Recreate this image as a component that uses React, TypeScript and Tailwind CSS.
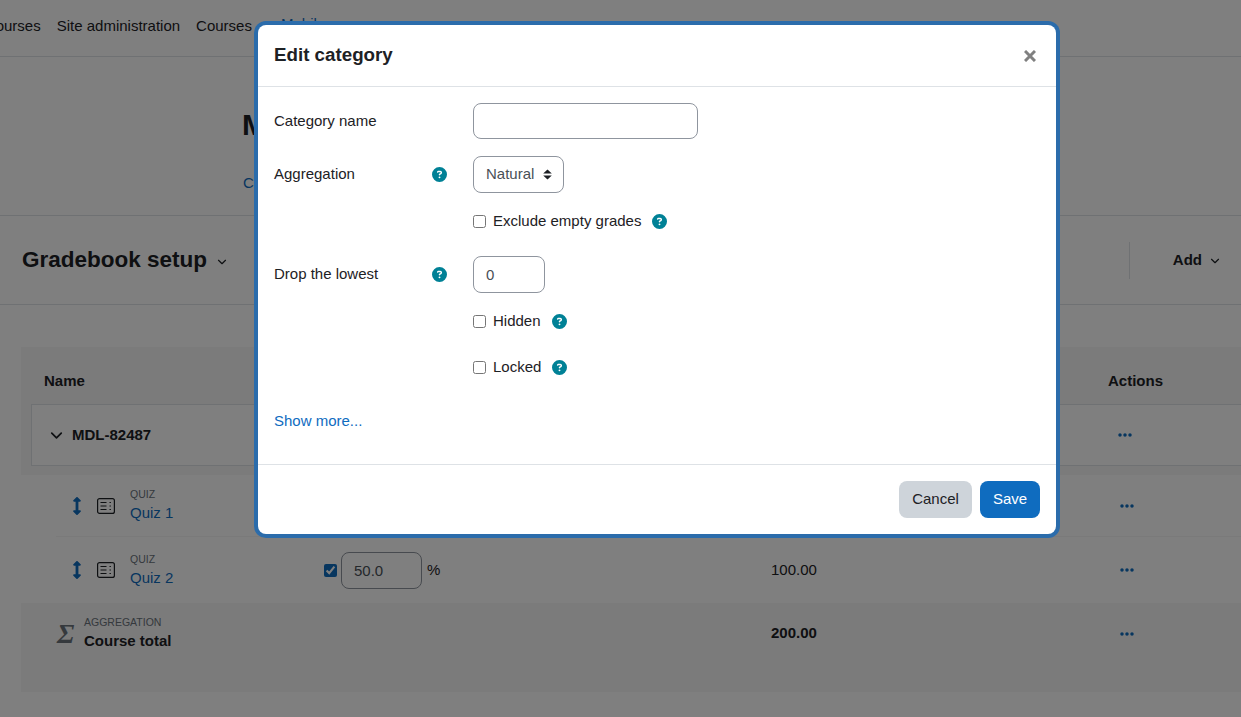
import { FaCircleQuestion, FaEllipsis } from 'react-icons/fa6';
import { FaArrowsAltV } from 'react-icons/fa';
import { ChevronDown } from 'lucide-react';

const Help = () => <FaCircleQuestion className="text-[#008196] text-[15px] shrink-0" />;

const Dots = () => <FaEllipsis className="text-[#0f6cbf] text-[16px] shrink-0" />;

const QuizIcon = () => (
  <svg width="18" height="16" viewBox="0 0 18 16" fill="none" stroke="#1d2125" strokeWidth="1.2" className="shrink-0">
    <rect x="0.6" y="0.6" width="16.8" height="14.8" rx="2" />
    <path d="M3.5 4.5h6M3.5 8h6M3.5 11.5h6" />
    <path d="M12.5 4.5h2M12.5 8h2M12.5 11.5h2" strokeDasharray="1.4 0.6" />
  </svg>
);

function CheckRow({ label, className }: { label: string; className: string }) {
  return (
    <label className={`flex items-center ml-[215px] ${className}`}>
      <input type="checkbox" className="w-[13px] h-[13px] m-0" />
      <span className="ml-[7px] mr-[11px]">{label}</span>
      <Help />
    </label>
  );
}

function QuizRow({ name, weight, total, className }: { name: string; weight?: string; total?: string; className: string }) {
  return (
    <div className={`flex items-center ml-[35px] ${className}`}>
      <FaArrowsAltV className="text-[#0f6cbf] text-[18px] ml-[16px] mr-[15px] w-[10px]" />
      <QuizIcon />
      <div className="ml-[15px] w-[194px]">
        <div className="text-[10.5px] leading-[14px] text-[#6a737b]">QUIZ</div>
        <div className="text-[#0f6cbf] leading-[22px] mt-[1px]">{name}</div>
      </div>
      <div className="flex items-center w-[447px]">
        {weight && (
          <>
            <input type="checkbox" defaultChecked className="w-[13px] h-[13px] m-0 accent-[#0f6cbf]" />
            <input
              readOnly
              value={weight}
              className="ml-[4px] w-[81px] h-[37px] px-[12px] border border-[#8f959e] rounded-lg text-[#495057] text-[15px]"
            />
            <span className="ml-[5px]">%</span>
          </>
        )}
      </div>
      <div className="w-[348px]">{total}</div>
      <Dots />
    </div>
  );
}

export default function App() {
  return (
    <div className="relative h-[717px] w-[1241px] overflow-hidden bg-white text-[15px] text-[#1d2125] font-['Liberation_Sans',sans-serif]">
      {/* page behind the dialog */}
      <nav className="flex items-center gap-4 h-[57px] border-b border-[#dee2e6] -ml-[36px] pb-[4px] whitespace-nowrap">
        <span>My courses</span>
        <span>Site administration</span>
        <span>Courses</span>
        <span className="text-[#0f6cbf] ml-[13px] -mt-[3px]">Mobile app</span>
      </nav>

      <header className="h-[159px] border-b border-[#dee2e6] pl-[242px]">
        <h1 className="text-[30px] font-bold leading-none pt-[53px] whitespace-nowrap">MDL-82487</h1>
        <div className="text-[#0f6cbf] mt-[32px] pl-px">Course</div>
      </header>

      <div className="flex items-center h-[89px] border-b border-[#dee2e6] pl-[22px] pr-[19px]">
        <span className="text-[22.5px] font-bold whitespace-nowrap">Gradebook setup</span>
        <ChevronDown size={14} className="ml-2 mt-1" />
        <div className="ml-auto h-[37px] border-l border-[#dee2e6] mr-[43px]" />
        <span className="font-bold">Add</span>
        <ChevronDown size={14} className="ml-[6px] mt-px" />
      </div>

      <section className="ml-[21px] mt-[42px] h-[345px] bg-[#f6f6f6]">
        <div className="flex items-center justify-between h-[57px] pl-[23px] pr-[78px] font-bold pt-[12px]">
          <span>Name</span>
          <span>Actions</span>
        </div>
        <div className="flex items-center h-[62px] ml-[10px] bg-white border border-r-0 border-[#dee2e6] pl-[15px] font-bold">
          <ChevronDown size={19} strokeWidth={2.2} />
          <span className="ml-[6px]">MDL-82487</span>
          <div className="ml-auto mr-[108px]">
            <Dots />
          </div>
        </div>
        <div className="bg-white mt-[9px]">
          <QuizRow name="Quiz 1" className="h-[62px] border-b border-[#f4f4f4]" />
          <QuizRow name="Quiz 2" weight="50.0" total="100.00" className="h-[66px]" />
        </div>
        <div className="flex items-center h-[61px]">
          <span className="ml-[36px] w-[27px] text-[28px] font-bold italic text-[#6a737b] font-['Liberation_Serif',serif]">Σ</span>
          <div className="w-[687px]">
            <div className="text-[10.5px] leading-[14px] text-[#6a737b]">AGGREGATION</div>
            <div className="font-bold mt-[1px]">Course total</div>
          </div>
          <div className="w-[348px] font-bold">200.00</div>
          <Dots />
        </div>
      </section>

      {/* backdrop and dialog */}
      <div className="absolute inset-0 bg-black/50 pl-[258px] pt-[25px]">
        <div className="w-[798px] h-[509px] bg-white rounded-lg ring-[4px] ring-[#2b6cab] flex flex-col">
          <div className="flex items-center justify-between h-[62px] border-b border-[#dee2e6] px-4 shrink-0">
            <h5 className="text-[18.75px] font-bold">Edit category</h5>
            <svg width="12" height="12" viewBox="0 0 12 12" stroke="#808080" strokeWidth="3" className="mr-[4px]">
              <path d="M1 1l10 10M11 1L1 11" />
            </svg>
          </div>

          <form className="flex-1 pt-4">
            <div className="flex items-center h-[36px]">
              <label className="ml-4 w-[199px]">Category name</label>
              <input className="w-[225px] h-[36px] border border-[#8f959e] rounded-lg" />
            </div>
            <div className="flex items-center h-[37px] mt-[17px]">
              <label className="ml-4 w-[158px]">Aggregation</label>
              <Help />
              <div className="ml-[26px] flex items-center justify-between w-[91px] h-[37px] pl-[12px] pr-[11px] border border-[#8f959e] rounded-lg text-[#495057]">
                Natural
                <svg width="9" height="11" viewBox="0 0 9 11" fill="#1d2125" className="shrink-0">
                  <path d="M4.5 0.5L8.8 4.4H0.2zM4.5 10.5L0.2 6.6H8.8z" />
                </svg>
              </div>
            </div>
            <CheckRow label="Exclude empty grades" className="mt-[18px] h-[20px]" />
            <div className="flex items-center h-[37px] mt-[25px]">
              <label className="ml-4 w-[158px]">Drop the lowest</label>
              <Help />
              <input
                readOnly
                value="0"
                className="ml-[26px] w-[72px] h-[37px] px-[12px] border border-[#8f959e] rounded-lg text-[#495057]"
              />
            </div>
            <CheckRow label="Hidden" className="mt-[18px] h-[20px]" />
            <CheckRow label="Locked" className="mt-[26px] h-[20px]" />
            <div className="ml-4 mt-[33px] text-[#0f6cbf]">Show more...</div>
          </form>

          <div className="flex items-center justify-end gap-2 h-[70px] border-t border-[#dee2e6] px-4 shrink-0">
            <button className="h-[37px] w-[73px] rounded-lg bg-[#ced4da]">Cancel</button>
            <button className="h-[37px] w-[60px] rounded-lg bg-[#0f6cbf] text-white">Save</button>
          </div>
        </div>
      </div>
    </div>
  );
}
